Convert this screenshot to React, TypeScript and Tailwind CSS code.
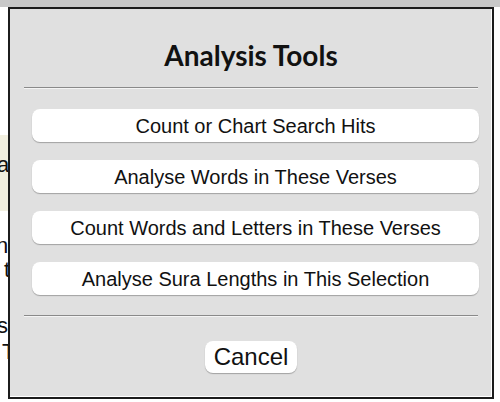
import React from 'react';

const tools = [
    'Count or Chart Search Hits',
    'Analyse Words in These Verses',
    'Count Words and Letters in These Verses',
    'Analyse Sura Lengths in This Selection',
];

const App = () => {
    return (
        <div className="relative w-[500px] h-[402px] bg-white overflow-hidden" style={{ fontFamily: '"Liberation Sans", Arial, sans-serif' }}>
            {/* top strip of the page behind */}
            <div className="h-[7px] bg-[#c8c8c8]" />

            {/* page content peeking out on the left, mostly covered by the dialog */}
            <div className="w-[40px] text-[22px] leading-[26px] text-[#111]">
                <div className="mt-[128px] h-[76px] bg-[#f1efdf] pt-[17px]">
                    <span className="-ml-[3px]">a</span>
                </div>
                <div className="mt-[22px] -ml-[4px]"><span>n</span></div>
                <div className="-mt-[2px] ml-[4px]"><span>t</span></div>
                <div className="mt-[30px] -ml-[3px]"><span>s</span></div>
                <div className="ml-[2px]"><span>T</span></div>
            </div>

            {/* the dialog */}
            <div className="absolute left-[8px] top-[7px] w-[486px] h-[392px] border-2 border-[#1c1c1c] bg-[#e0e0e0] shadow-[inset_-1px_-1px_0_#ffffff] flex flex-col px-[14px]">
                <h2 className="mt-[30px] h-[32px] text-center text-[28px] leading-[32px] font-bold text-[#111]" style={{ fontFamily: 'Lato, "Open Sans", sans-serif' }}>
                    Analysis Tools
                </h2>
                <div className="mt-[16px] h-[2px] border-t border-[#8a8a8a] border-b border-b-[#f4f4f4]" />

                <div className="mt-[20px] ml-[8px] -mr-[1px] flex flex-col gap-[18px]">
                    {tools.map((t) => (
                        <button
                            key={t}
                            className="h-[33px] bg-white rounded-[8px] shadow-[0_1px_1px_rgba(0,0,0,0.28)] text-[20px] text-[#111] leading-none"
                        >
                            {t}
                        </button>
                    ))}
                </div>

                <div className="mt-[20px] h-[2px] border-t border-[#8a8a8a] border-b border-b-[#f4f4f4]" />

                <div className="mt-[24px] flex justify-center">
                    <button className="h-[32px] px-[9px] bg-white rounded-[8px] shadow-[0_1px_1px_rgba(0,0,0,0.28)] text-[24px] text-[#111] leading-none">
                        Cancel
                    </button>
                </div>
            </div>
        </div>
    );
};

export default App;
